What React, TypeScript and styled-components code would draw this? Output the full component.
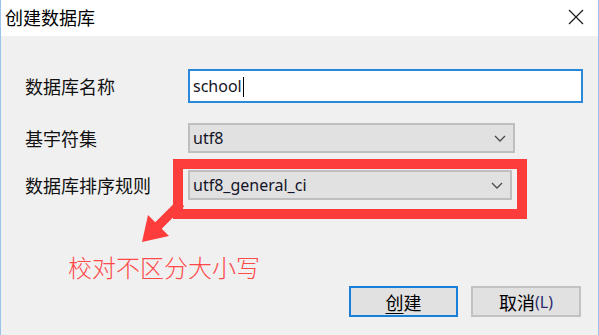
import React from "react";
import styled, { createGlobalStyle } from "styled-components";

const Global = createGlobalStyle`
  html, body { margin: 0; padding: 0; background: #f0f0f0; }
  * { box-sizing: border-box; }
`;

const CJK = `"Noto Sans CJK SC", "Noto Sans", sans-serif`;
const LATIN = `"Noto Sans", "Noto Sans CJK SC", sans-serif`;

const Window = styled.div`
  width: 599px;
  height: 335px;
  display: flex;
  flex-direction: column;
  background: #f0f0f0;
  border-left: 1px solid #9cc4ea;
  border-right: 1px solid #9cc4ea;
  overflow: hidden;
  font-family: ${CJK};
  color: #000;
`;

const TitleBar = styled.div`
  height: 36px;
  flex: none;
  background: #fff;
  display: flex;
  align-items: center;
  justify-content: space-between;
  padding: 0 14px 0 4px;
`;

const Title = styled.span`
  font-size: 18px;
  line-height: 20px;
  margin-top: -2px;
  color: #000;
`;

const CloseIcon = styled.svg`
  width: 16px;
  height: 16px;
  display: block;
  margin-top: -2px;
`;

const Body = styled.div`
  flex: 1;
  display: flex;
  flex-direction: column;
  padding: 33px 17px 0 24px;
  position: relative;
`;

const Row = styled.div<{ $top: number; $h: number }>`
  display: grid;
  grid-template-columns: 163px auto;
  align-items: center;
  margin-top: ${(p) => p.$top}px;
  height: ${(p) => p.$h}px;
`;

const Label = styled.span`
  font-size: 18px;
  line-height: 22px;
  color: #111;
`;

const TextBox = styled.div<{ $w: number }>`
  width: ${(p) => p.$w}px;
  height: 34px;
  background: #fff;
  border: 2px solid #2b87d9;
  display: flex;
  align-items: center;
  padding-left: 3px;
  font-family: ${LATIN};
  font-size: 16px;
  color: #141428;
`;

const Caret = styled.span`
  display: inline-block;
  width: 1px;
  height: 20px;
  background: #000;
  margin-left: 1px;
  margin-top: 1px;
`;

const Select = styled.div<{ $w: number }>`
  width: ${(p) => p.$w}px;
  height: 30px;
  background: #e1e1e1;
  border: 2px solid #bfbfbf;
  display: flex;
  align-items: center;
  justify-content: space-between;
  padding: 0 7px 0 3px;
  font-family: ${LATIN};
  font-size: 16px;
  color: #141428;
`;

const Chevron = styled.svg`
  width: 12px;
  height: 7px;
  display: block;
  margin-top: 1px;
`;

const Annotated = styled.div`
  position: relative;
  width: fit-content;
`;

const RedFrame = styled.span`
  position: absolute;
  left: -15px;
  top: -11px;
  right: -15px;
  bottom: -19px;
  border: 10px solid #fd3c3c;
  pointer-events: none;
`;

const Arrow = styled.svg`
  position: absolute;
  left: -50px;
  top: 25px;
  width: 50px;
  height: 50px;
  overflow: visible;
`;

const Note = styled.div`
  margin-top: 52px;
  margin-left: 43px;
  height: 30px;
  line-height: 30px;
  font-size: 24px;
  font-weight: 300;
  color: #ff4848;
`;

const ButtonRow = styled.div`
  margin-top: 4px;
  display: flex;
  justify-content: flex-end;
  gap: 13px;
`;

const Button = styled.div<{ $primary?: boolean; $w: number }>`
  width: ${(p) => p.$w}px;
  height: 31px;
  background: #e1e1e1;
  border: 2px solid ${(p) => (p.$primary ? "#1a7fd8" : "#c2c2c2")};
  display: flex;
  align-items: center;
  justify-content: center;
  font-family: ${CJK};
  font-size: 18px;
  line-height: 20px;
  color: #000;
`;

const Accel = styled.span`
  text-decoration: underline;
  text-underline-offset: 3px;
  text-decoration-thickness: 1px;
`;

const Mnemonic = styled.span`
  font-family: ${LATIN};
  font-size: 16px;
  color: #2a2a6a;
`;

const DownChevron = () => (
  <Chevron viewBox="0 0 12 7">
    <path d="M1 1 L6 6 L11 1" fill="none" stroke="#4a4a4a" strokeWidth="1.3" />
  </Chevron>
);

export default function App() {
  return (
    <>
      <Global />
      <Window>
        <TitleBar>
          <Title>创建数据库</Title>
          <CloseIcon viewBox="0 0 16 16">
            <path d="M1 1 L15 15 M15 1 L1 15" stroke="#1a1a1a" strokeWidth="1.2" fill="none" />
          </CloseIcon>
        </TitleBar>
        <Body>
          <Row $top={0} $h={34}>
            <Label>数据库名称</Label>
            <TextBox $w={395}>
              school
              <Caret />
            </TextBox>
          </Row>
          <Row $top={20} $h={30}>
            <Label>基宇符集</Label>
            <Select $w={327}>
              utf8
              <DownChevron />
            </Select>
          </Row>
          <Row $top={17} $h={30}>
            <Label>数据库排序规则</Label>
            <Annotated>
              <Select $w={324}>
                utf8_general_ci
                <DownChevron />
              </Select>
              <RedFrame />
              <Arrow viewBox="0 0 50 50">
                <polygon points="15.8,28.8 22.2,35.2 46.2,11.2 39.8,4.8" fill="#fd3c3c" />
                <polygon points="4,47 10,20 31,41" fill="#fd3c3c" />
              </Arrow>
            </Annotated>
          </Row>
          <Note>校对不区分大小写</Note>
          <ButtonRow>
            <Button $primary $w={109}>
              <Accel>创</Accel>建
            </Button>
            <Button $w={110}>
              取消<Mnemonic>(L)</Mnemonic>
            </Button>
          </ButtonRow>
        </Body>
      </Window>
    </>
  );
}
